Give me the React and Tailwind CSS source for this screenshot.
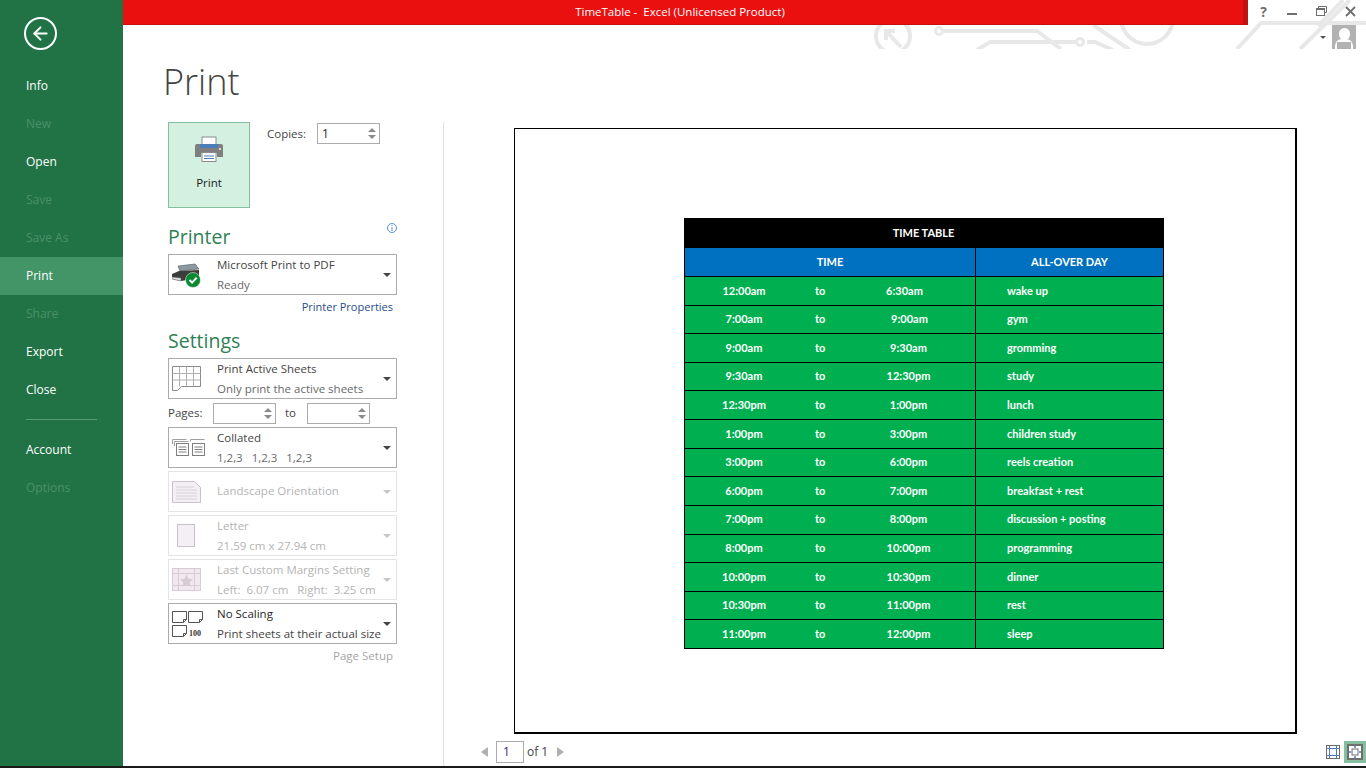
import { ArrowLeft } from "lucide-react";

const uiFont = "font-['Open_Sans','Noto_Sans',sans-serif]";

const navItems = [
  { label: "Info" },
  { label: "New", off: true },
  { label: "Open" },
  { label: "Save", off: true },
  { label: "Save As", off: true },
  { label: "Print", active: true },
  { label: "Share", off: true },
  { label: "Export" },
  { label: "Close" },
];

const rows = [
  ["12:00am", "6:30am", "wake up", "-translate-x-[4px]"],
  ["7:00am", "9:00am", "gym", "translate-x-[1px]"],
  ["9:00am", "9:30am", "gromming", ""],
  ["9:30am", "12:30pm", "study", ""],
  ["12:30pm", "1:00pm", "lunch", ""],
  ["1:00pm", "3:00pm", "children study", ""],
  ["3:00pm", "6:00pm", "reels creation", ""],
  ["6:00pm", "7:00pm", "breakfast + rest", ""],
  ["7:00pm", "8:00pm", "discussion + posting", ""],
  ["8:00pm", "10:00pm", "programming", ""],
  ["10:00pm", "10:30pm", "dinner", ""],
  ["10:30pm", "11:00pm", "rest", ""],
  ["11:00pm", "12:00pm", "sleep", ""],
];

const Caret = ({ off }) => (
  <div className={`w-0 h-0 border-x-[4px] border-x-transparent border-t-[4px] ${off ? "border-t-[#c6c6c6]" : "border-t-[#444]"}`} />
);

const Spinner = () => (
  <div className="flex flex-col gap-[3px] items-center">
    <div className="w-0 h-0 border-x-[4px] border-x-transparent border-b-[4px] border-b-[#8a8a8a]" />
    <div className="w-0 h-0 border-x-[4px] border-x-transparent border-t-[4px] border-t-[#8a8a8a]" />
  </div>
);

const PrinterIcon = () => (
  <svg width="30" height="27" viewBox="0 0 30 27">
    <rect x="8" y="1" width="14" height="9" fill="#fff" stroke="#8a8a8a" />
    <path d="M3 8h24a2 2 0 0 1 2 2v11h-6v-4H7v4H1V10a2 2 0 0 1 2-2z" fill="#7f7f7f" />
    <rect x="6" y="8" width="18" height="4" fill="#4a7ebb" />
    <rect x="8" y="16.5" width="14" height="9" fill="#fff" stroke="#8a8a8a" />
    <path d="M10 20h10M10 22.5h10" stroke="#4a7ebb" />
    <rect x="25" y="12" width="2" height="2" fill="#ddd" />
  </svg>
);

const PdfPrinterIcon = () => (
  <svg width="30" height="26" viewBox="0 0 30 26">
    <path d="M6 4l17-2 4 5-19 2z" fill="#8a9aa0" stroke="#555" strokeWidth="0.6" />
    <path d="M0 12l7-3 20-1v8l-18 3-9-2z" fill="#3c3c3c" />
    <path d="M0 15l9 1v3l-9-2z" fill="#ddd" stroke="#666" strokeWidth="0.5" />
    <circle cx="21" cy="18" r="7.5" fill="#0a8a32" stroke="#fff" strokeWidth="0.5" />
    <path d="M17.5 18l2.6 2.6 4.6-5" fill="none" stroke="#fff" strokeWidth="2" />
  </svg>
);

const SheetIcon = () => (
  <svg width="29" height="25" viewBox="0 0 29 25" fill="none" stroke="#8a8a8a">
    <path d="M.5.5h28v20h-19l-4 4h-5z" />
    <path d="M.5 7.5h28M.5 14h28M7.5.5v20M14.5.5v20M21.5.5v20" stroke="#b0b0b0" />
  </svg>
);

const CollateIcon = () => (
  <svg width="33" height="17" viewBox="0 0 33 17" fill="none" stroke="#7f7f7f">
    <path d="M.5 5V.5h14M2.5 7V2.5h14M18.5 2.5V.5h14" stroke="#a0a0a0" />
    <rect x="4.5" y="4.5" width="12" height="12" fill="#fff" />
    <rect x="20.5" y="4.5" width="12" height="12" fill="#fff" />
    <path d="M6.5 8h8M6.5 10.5h8M6.5 13h8M22.5 8h8M22.5 10.5h8M22.5 13h8" />
  </svg>
);

const OrientationIcon = () => (
  <svg width="29" height="22" viewBox="0 0 29 22" fill="#f3eff5" stroke="#c8c0cc">
    <path d="M.5.5h22l6 6v15H.5z" />
    <path d="M4 6h18M4 9h21M4 12h21M4 15h21M4 18h21" stroke="#d2d2d2" fill="none" />
  </svg>
);

const PaperIcon = () => (
  <div className="ml-[5px] w-[18px] h-[23px] bg-[#f3eff5] border border-[#c8c0cc]" />
);

const MarginsIcon = () => (
  <svg width="29" height="23" viewBox="0 0 29 23" fill="#f1e9ef" stroke="#d8ccd4">
    <rect x="0.5" y="0.5" width="28" height="22" />
    <path d="M6.5.5v22M22.5.5v22M.5 5.5h28M.5 17.5h28" fill="none" />
    <path d="M14.5 6.5l2 4.2 4.5.5-3.3 3 .9 4.4-4.1-2.2-4.1 2.2.9-4.4-3.3-3 4.5-.5z" fill="#d8ccd4" stroke="none" />
  </svg>
);

const ScalingIcon = () => (
  <svg width="32" height="28" viewBox="0 0 32 28" fill="none" stroke="#555">
    <path d="M.5 1.5h14v8l-3 3h-11zM14.5 9.5h-3v3" />
    <path d="M16.5 1.5h14v8l-3 3h-11zM30.5 9.5h-3v3" />
    <path d="M.5 15.5h14v8l-3 3h-11zM14.5 23.5h-3v3" />
    <text x="17" y="26" fontSize="8" fontWeight="700" fill="#333" stroke="none" fontFamily="'Liberation Serif', serif">100</text>
  </svg>
);

const Dropdown = ({ icon, title, sub, off, dark }) => (
  <div className={`h-[41px] w-[229px] flex items-center border ${off ? "border-[#e4e4e4]" : "border-[#ababab]"}`}>
    <div className="w-[48px] pl-[3px] flex justify-start shrink-0">{icon}</div>
    <div className={`flex-1 min-w-0 flex flex-col gap-[3px] text-[11.5px] leading-[17px] whitespace-pre ${sub ? "" : "pb-[3px]"} ${off ? "text-[#b4b4b4]" : "text-[#6a6a6a]"}`}>
      {title && <span className={off ? "" : dark ? "text-[#262626]" : "text-[#444]"}>{title}</span>}
      {sub && <span className={dark ? "text-[#444]" : ""}>{sub}</span>}
    </div>
    <div className="w-[13px] flex justify-start shrink-0">
      <Caret off={off} />
    </div>
  </div>
);

const NumberBox = ({ className, value }) => (
  <div className={`h-[21px] border border-[#ababab] flex items-center justify-between pl-[4px] pr-[3px] ${className}`}>
    <span className="text-[12px] text-[#262626]">{value}</span>
    <Spinner />
  </div>
);

const Sidebar = () => (
  <aside className="w-[123px] shrink-0 bg-[#217346] text-white text-[12px] flex flex-col pt-[17px]">
    <div className="ml-[24px] w-[33px] h-[33px] rounded-full border-2 border-white flex items-center justify-center">
      <ArrowLeft size={21} strokeWidth={2.2} />
    </div>
    <nav className="mt-[17px] flex flex-col">
      {navItems.map((item) => (
        <div
          key={item.label}
          className={`h-[38px] flex items-center pl-[26px] ${item.active ? "bg-[#439467]" : ""} ${item.off ? "text-[#4b9068]" : ""}`}
        >
          {item.label}
        </div>
      ))}
    </nav>
    <div className="ml-[26px] mt-[10px] w-[71px] h-px bg-[#5a9a76]" />
    <div className="mt-[11px] h-[38px] flex items-center pl-[26px]">Account</div>
    <div className="h-[38px] flex items-center pl-[26px] text-[#4b9068]">Options</div>
  </aside>
);

const CircuitArt = () => (
  <svg className="absolute top-0 left-[750px] pointer-events-none" width="493" height="49" viewBox="0 0 493 49" fill="none" stroke="#e8e8e8" strokeWidth="4">
    <circle cx="20" cy="36" r="17" />
    <path d="M28 47L13 31M13 40v-9h9" />
    <circle cx="66" cy="31" r="3.5" strokeWidth="3" />
    <path d="M70 31h94l24 18" />
    <path d="M104 50l13-8h86M214 42h8l18 8" />
    <circle cx="207" cy="42" r="3.5" strokeWidth="3" />
    <path d="M220 25l37 25" />
    <circle cx="274" cy="18" r="26" />
    <path d="M364 49l24-26h105" />
    <path d="M427 49l50-49" />
    <path d="M445 26L470 0" />
  </svg>
);

const TitleBar = () => (
  <header className="h-[25px] flex relative z-10">
    <div className="flex-1 bg-[#ea1010] border-b border-[#c80f0f] border-r-[5px] border-r-[#bf1212] flex items-center justify-center">
      <span className={`text-white text-[11.5px] whitespace-pre ${uiFont} -translate-x-[3px]`}>TimeTable -  Excel (Unlicensed Product)</span>
    </div>
    <div className="w-[118px] shrink-0 flex items-center text-[#6e6e6e] pb-[3px]">
      <span className="w-[31px] text-center font-bold text-[14px]">?</span>
      <svg className="ml-[8px]" width="10" height="10" viewBox="0 0 10 10"><rect y="7" width="10" height="2" fill="#6e6e6e" /></svg>
      <svg className="ml-[19px]" width="11" height="11" viewBox="0 0 11 11" fill="none" stroke="#6e6e6e"><path d="M2.5 2.5V.5h8v6h-2" /><rect x="0.5" y="2.5" width="8" height="7" /><path d="M.5 3.5h8" /></svg>
      <svg className="ml-[18px]" width="11" height="11" viewBox="0 0 11 11" stroke="#6e6e6e" strokeWidth="1.8"><path d="M1 1l9 9M10 1l-9 9" /></svg>
    </div>
  </header>
);

const AccountBadge = () => (
  <div className="absolute top-[25px] right-[10px] flex items-center gap-[6px]">
    <div className="w-0 h-0 border-x-[3px] border-x-transparent border-t-[3px] border-t-[#555]" />
    <div className="w-[24px] h-[24px] bg-[#b2b2b2] overflow-hidden relative">
      <div className="absolute left-[7px] top-[3px] w-[11px] h-[12px] rounded-full bg-white" />
      <div className="absolute left-[3px] top-[14px] w-[18px] h-[14px] rounded-t-[7px] bg-white" />
      <div className="absolute left-[5px] top-[17px] w-[14px] h-[10px] bg-[#b2b2b2]" />
    </div>
  </div>
);

const TimeTable = () => (
  <div className="w-[480px] h-[431px] grid grid-rows-[30px_28px_repeat(13,1fr)] border-r border-b border-black font-['Lato',sans-serif] font-bold text-white text-[11px]">
    <div className="bg-black flex items-center justify-center">TIME TABLE</div>
    <div className="grid grid-cols-[291px_1fr] bg-[#0070c0] border-l border-black">
      <div className="flex items-center justify-center border-r border-black">TIME</div>
      <div className="flex items-center justify-center">ALL-OVER DAY</div>
    </div>
    {rows.map(([start, end, task, nudge]) => (
      <div key={start} className="grid grid-cols-[291px_1fr] bg-[#00b050] border-l border-t border-black">
        <div className="grid grid-cols-[118px_36px_1fr] items-center border-r border-black">
          <span className="text-center">{start}</span>
          <span className="pl-[12px]">to</span>
          <span className={`text-center pl-[3px] ${nudge}`}>{end}</span>
        </div>
        <div className="flex items-center pl-[31px]">{task}</div>
      </div>
    ))}
  </div>
);

const SettingsPane = () => (
  <section className={`w-[321px] shrink-0 border-r border-[#e1e1e1] pl-[45px] ${uiFont}`}>
    <div className="flex">
      <button className="w-[82px] h-[86px] bg-[#d3f0e0] border border-[#86bfa0] flex flex-col items-center pt-[13px]">
        <PrinterIcon />
        <span className="mt-[12px] text-[11.5px] leading-[16px] text-[#1a1a1a]">Print</span>
      </button>
      <div className="ml-[17px] flex h-[23px] items-center">
        <span className="text-[11.5px] text-[#444] w-[50px]">Copies:</span>
        <NumberBox className="w-[63px]" value="1" />
      </div>
    </div>

    <div className="w-[229px] mt-[14px] flex items-start justify-between h-[32px]">
      <h2 className="text-[19.5px] leading-[30px] text-[#2f7f54]">Printer</h2>
      <svg className="mt-[1px]" width="10" height="10" viewBox="0 0 10 10" fill="none" stroke="#5b8fd0"><circle cx="5" cy="5" r="4.5" /><path d="M5 4v4M5 2v1" /></svg>
    </div>
    <Dropdown icon={<PdfPrinterIcon />} title="Microsoft Print to PDF" sub="Ready" />
    <div className="w-[229px] pr-[4px] mt-[3px] text-right text-[11px] leading-[17px] text-[#1f4e8c]">Printer Properties</div>

    <h2 className="mt-[11px] text-[19.5px] leading-[30px] text-[#2f7f54] h-[32px]">Settings</h2>
    <Dropdown icon={<SheetIcon />} title="Print Active Sheets" sub="Only print the active sheets" />
    <div className="w-[229px] h-[28px] flex items-center text-[11.5px] text-[#444]">
      <span className="w-[45px]">Pages:</span>
      <NumberBox className="w-[63px]" value="" />
      <span className="w-[31px] pl-[9px]">to</span>
      <NumberBox className="w-[63px]" value="" />
    </div>
    <div className="flex flex-col gap-[3px]">
      <Dropdown icon={<CollateIcon />} title="Collated" sub="1,2,3   1,2,3   1,2,3" />
      <Dropdown icon={<OrientationIcon />} title="Landscape Orientation" off />
      <Dropdown icon={<PaperIcon />} title="Letter" sub="21.59 cm x 27.94 cm" off />
      <Dropdown icon={<MarginsIcon />} title="Last Custom Margins Setting" sub="Left:  6.07 cm   Right:  3.25 cm" off />
      <Dropdown icon={<ScalingIcon />} title="No Scaling" sub="Print sheets at their actual size" dark />
    </div>
    <div className="w-[229px] pr-[4px] mt-[3px] text-right text-[11.5px] leading-[17px] text-[#a6a6a6]">Page Setup</div>
  </section>
);

const Preview = () => (
  <section className="flex-1 min-w-0 pt-[6px] pl-[70px] flex flex-col">
    <div className="w-[783px] h-[606px] border border-black border-r-2 border-b-2 pt-[89px] pl-[169px]">
      <TimeTable />
    </div>
    <div className={`mt-[7px] h-[22px] flex items-center text-[12px] text-[#444] ${uiFont}`}>
      <div className="w-[711px] flex items-center -ml-[33px]">
        <div className="w-0 h-0 border-y-[5px] border-y-transparent border-r-[7px] border-r-[#b0b0b0]" />
        <div className="ml-[8px] w-[28px] h-[22px] border border-[#ababab] pl-[6px] leading-[20px] text-[#4b1a6b]">1</div>
        <span className="ml-[3px]">of 1</span>
        <div className="ml-[9px] w-0 h-0 border-y-[5px] border-y-transparent border-l-[7px] border-l-[#b0b0b0]" />
      </div>
      <svg className="ml-[134px]" width="14" height="14" viewBox="0 0 14 14" fill="none" stroke="#6e6e6e">
        <rect x="0.5" y="0.5" width="13" height="13" />
        <path d="M3.5 1v12M10.5 1v12M1 3.5h12M1 10.5h12" stroke="#4a7ebb" />
      </svg>
      <div className="ml-[4px] w-[22px] h-[22px] bg-[#86bfa0] flex items-center justify-center">
        <svg width="16" height="16" viewBox="0 0 16 16" fill="none">
          <rect x="1" y="1" width="14" height="14" fill="#fff" stroke="#6e6e6e" strokeWidth="2" />
          <rect x="5" y="5" width="6" height="6" stroke="#6e6e6e" />
          <path d="M8 2v2M8 12v2M2 8h2M12 8h2" stroke="#4a7ebb" strokeWidth="1.5" />
        </svg>
      </div>
    </div>
  </section>
);

export default function App() {
  return (
    <div className={`w-[1366px] h-[768px] overflow-hidden flex flex-col bg-white ${uiFont}`}>
      <div className="flex flex-1 min-h-0">
        <Sidebar />
        <main className="flex-1 min-w-0 flex flex-col relative">
          <CircuitArt />
          <TitleBar />
          <AccountBadge />
          <div className="h-[97px] pl-[40px] pt-[32px] relative">
            <h1 className="text-[36px] leading-[50px] font-light text-[#444]">Print</h1>
          </div>
          <div className="flex flex-1 min-h-0">
            <SettingsPane />
            <Preview />
          </div>
        </main>
      </div>
      <div className="h-[2px] bg-[#1a1a1a] shrink-0" />
    </div>
  );
}
